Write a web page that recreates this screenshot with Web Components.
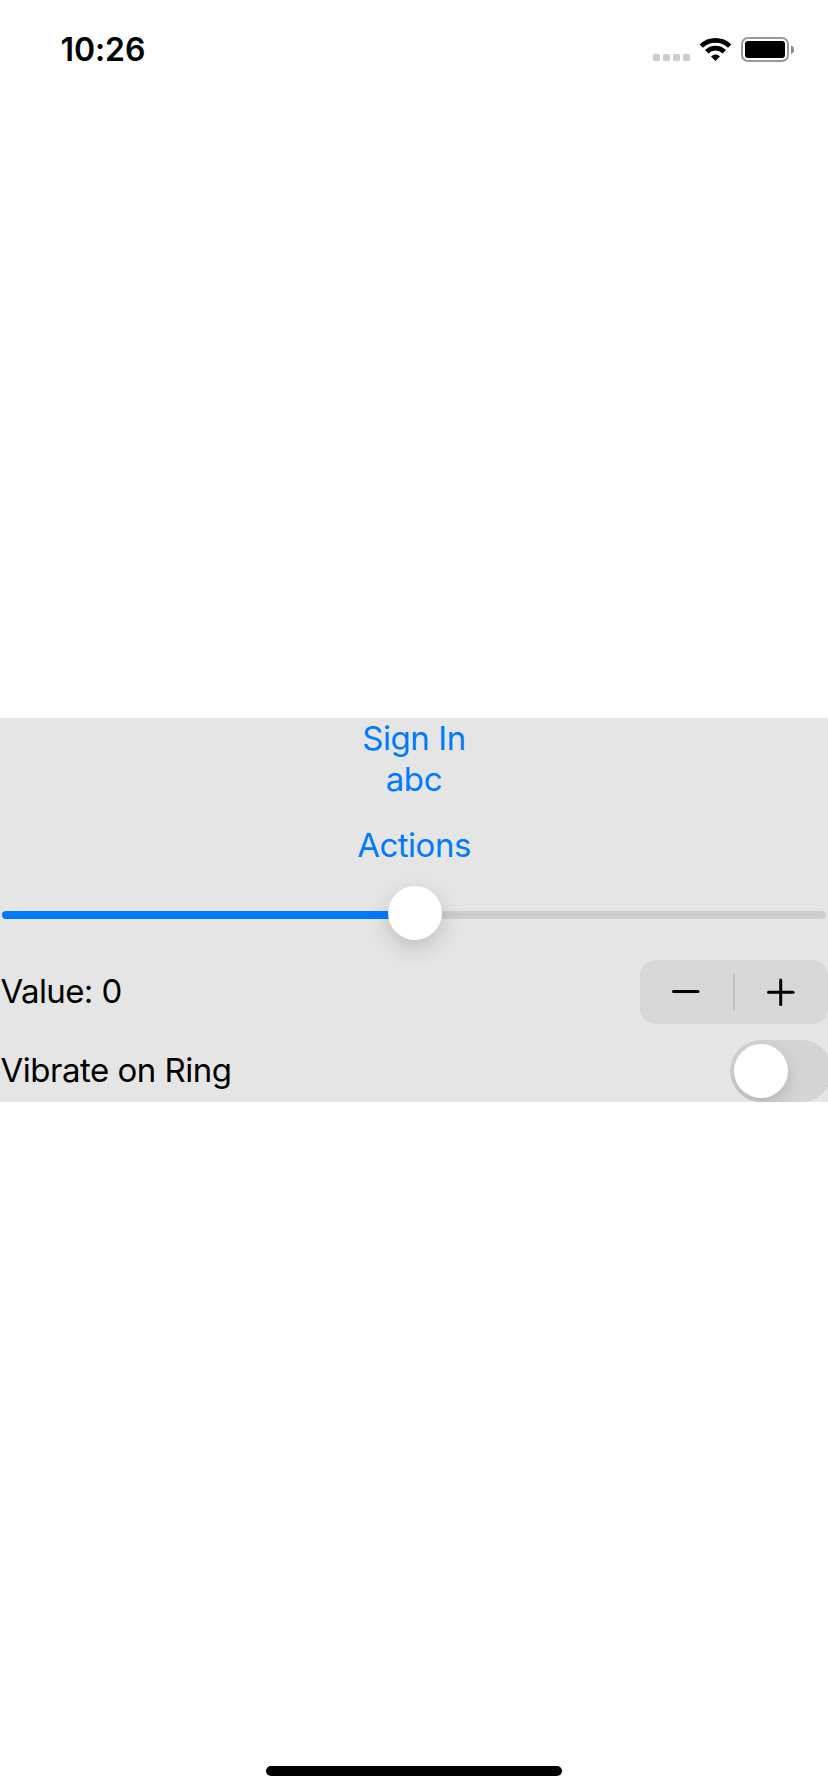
<!DOCTYPE html>
<html lang="en">
<head>
<meta charset="utf-8">
<title>Controls</title>
<style>
html, body { margin: 0; background: #fff; }
body { font-family: Inter, "Liberation Sans", sans-serif; overflow: hidden; }
</style>
</head>
<body>
<phone-screen>
  <status-bar slot="status">10:26</status-bar>
  <link-button style="--h:40px;--ls:-0.45px">Sign In</link-button>
  <link-button style="--h:42px;--ls:-0.3px">abc</link-button>
  <link-button style="--h:78px;--gap:6px;--ls:-0.5px">Actions</link-button>
  <range-slider></range-slider>
  <setting-row style="--h:64px;--gap:16px;--nudge:-1px;--ls:-0.6px">Value: 0<value-stepper slot="control"></value-stepper></setting-row>
  <setting-row style="--h:62px;--gap:16px;--nudge:-1px;--ls:-0.5px">Vibrate on Ring<toggle-switch slot="control"></toggle-switch></setting-row>
</phone-screen>
<script>
const define = (name, html) => customElements.define(name, class extends HTMLElement {
  constructor() {
    super();
    this.attachShadow({ mode: 'open' }).innerHTML = html;
  }
});

define('phone-screen', `<style>
:host { display: flex; flex-direction: column; width: 828px; height: 1792px; overflow: hidden; background: #fff; }
header { height: 718px; }
main { display: flex; flex-direction: column; height: 384px; background: #e5e5e5; overflow: hidden; flex: none; }
footer { flex: 1; display: flex; justify-content: center; align-items: flex-end; padding-bottom: 16px; }
i { width: 296px; height: 10px; border-radius: 5px; background: #000; }
</style><header><slot name="status"></slot></header><main><slot></slot></main><footer><i></i></footer>`);

define('status-bar', `<style>
:host { display: flex; justify-content: space-between; height: 98px; }
.time { margin-left: 60.5px; font-size: 32px; font-weight: 600; line-height: 100px; letter-spacing: -0.1px; }
svg { display: block; flex: none; }
</style><span class="time"><slot></slot></span>
<svg width="178" height="98" viewBox="650 0 178 98">
<g fill="#ccc"><rect x="653" y="54" width="7" height="7" rx="1.5"/><rect x="663" y="54" width="7" height="7" rx="1.5"/><rect x="673" y="54" width="7" height="7" rx="1.5"/><rect x="683" y="54" width="7" height="7" rx="1.5"/></g>
<g fill="none" stroke="#000" stroke-width="4.8"><path d="M701.3 46.1A20.3 20.3 0 0 1 729.7 46.1"/><path d="M706.7 51.8A12.6 12.6 0 0 1 724.3 51.8"/></g>
<path d="M715.5 61L711 56.4Q715.5 52.7 720 56.4Z"/>
<rect x="742" y="38" width="46" height="23" rx="6" fill="none" stroke="#999" stroke-width="2"/>
<rect x="745" y="41" width="40" height="17" rx="3"/>
<path d="M791 45.5Q794 46.5 794 49.7T791 54Z" fill="#888"/>
</svg>`);

define('link-button', `<style>
:host { display: block; height: var(--h); line-height: var(--h); margin-top: var(--gap, 0); text-align: center; font-size: 33px; letter-spacing: var(--ls); color: #007aff; }
</style><slot></slot>`);

define('range-slider', `<style>
:host { display: grid; height: 60px; padding: 0 2px; grid-template-columns: 1fr; align-items: center; }
.track { grid-area: 1/1; height: 8px; margin-top: 2px; border-radius: 4px; background: linear-gradient(to right, #007aff 50%, #cdcdcf 50%); }
.thumb { grid-area: 1/1; justify-self: center; width: 54px; height: 54px; margin: -2px 0 0 2px; border-radius: 50%; background: #fff; box-shadow: 0 8px 22px rgba(0,0,0,.17); }
</style><div class="track"></div><div class="thumb"></div>`);

define('setting-row', `<style>
:host { display: flex; justify-content: space-between; height: var(--h); margin-top: var(--gap); font-size: 33px; line-height: var(--h); letter-spacing: var(--ls); color: #000; }
.label { margin: var(--nudge) 0 0 0.5px; white-space: nowrap; }
</style><span class="label"><slot></slot></span><slot name="control"></slot>`);

define('value-stepper', `<style>
:host { display: block; width: 188px; height: 64px; border-radius: 16px; background: #d7d7d7; }
svg { display: block; }
</style><svg width="188" height="64" viewBox="0 0 188 64" stroke-linecap="round">
<path d="M94 14V50" stroke="#c2c2c3" stroke-width="2" stroke-linecap="butt"/>
<g stroke="#000" stroke-width="3"><path d="M33.5 31.5H58"/><path d="M128.5 32.3H153"/><path d="M140.7 20V44.5"/></g></svg>`);

define('toggle-switch', `<style>
:host { display: block; box-sizing: border-box; flex: none; width: 102px; height: 62px; margin-right: -4px; padding: 4px; border-radius: 31px; background: #d4d4d4; overflow: hidden; }
.knob { width: 54px; height: 54px; border-radius: 50%; background: #fff; box-shadow: 0 6px 16px rgba(0,0,0,.15); }
</style><div class="knob"></div>`);
</script>
</body>
</html>
